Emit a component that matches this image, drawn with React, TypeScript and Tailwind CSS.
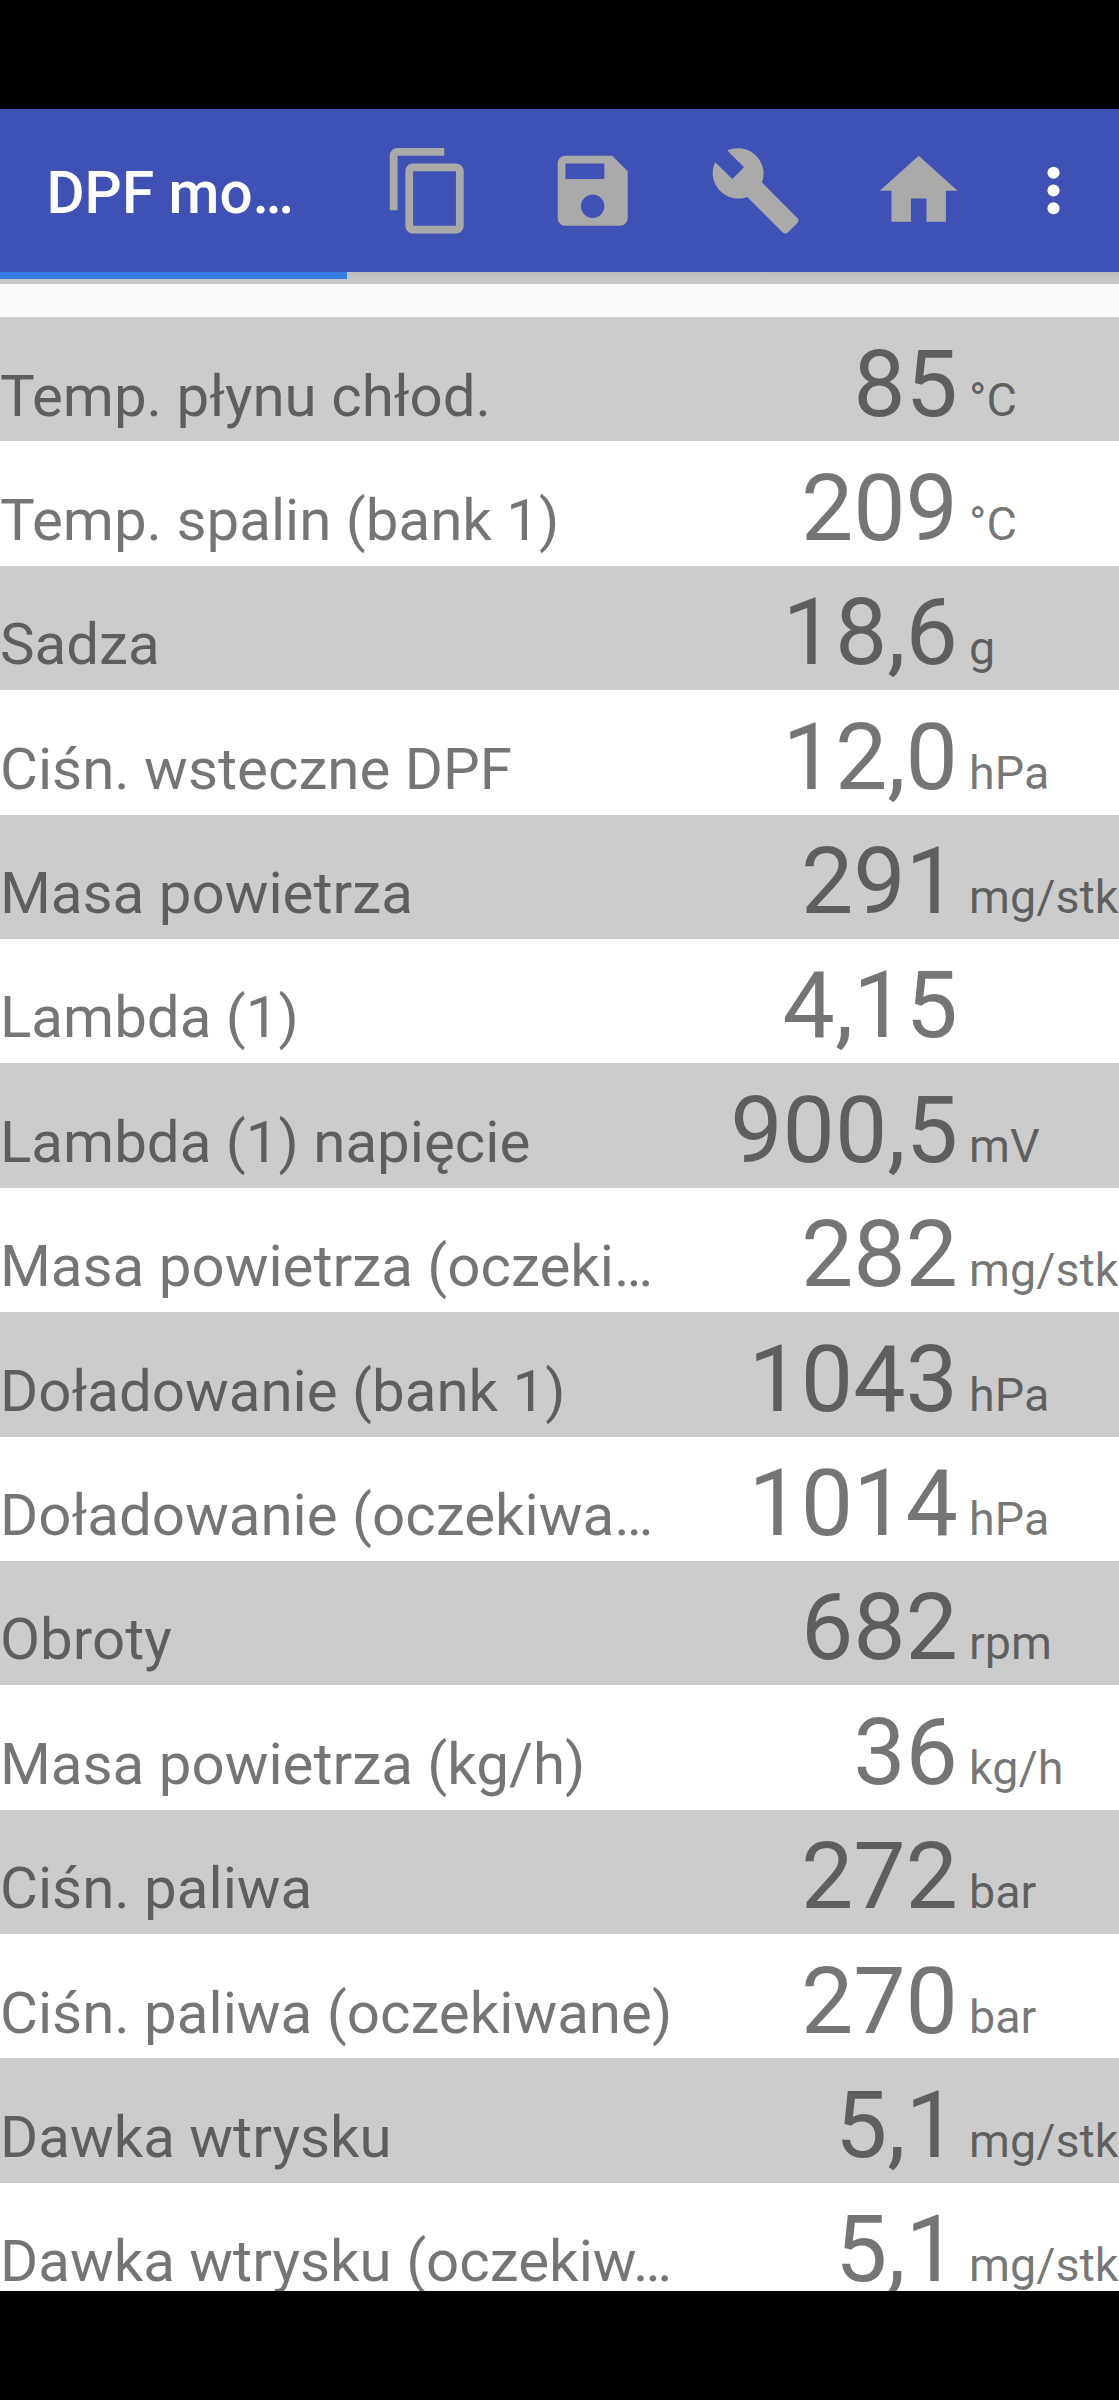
import { clsx } from 'clsx';

interface Reading {
  label: string;
  value: string;
  unit?: string;
}

const READINGS: Reading[] = [
  { label: 'Temp. płynu chłod.', value: '85', unit: '°C' },
  { label: 'Temp. spalin (bank 1)', value: '209', unit: '°C' },
  { label: 'Sadza', value: '18,6', unit: 'g' },
  { label: 'Ciśn. wsteczne DPF', value: '12,0', unit: 'hPa' },
  { label: 'Masa powietrza', value: '291', unit: 'mg/stk' },
  { label: 'Lambda (1)', value: '4,15' },
  { label: 'Lambda (1) napięcie', value: '900,5', unit: 'mV' },
  { label: 'Masa powietrza (oczeki…', value: '282', unit: 'mg/stk' },
  { label: 'Doładowanie (bank 1)', value: '1043', unit: 'hPa' },
  { label: 'Doładowanie (oczekiwa…', value: '1014', unit: 'hPa' },
  { label: 'Obroty', value: '682', unit: 'rpm' },
  { label: 'Masa powietrza (kg/h)', value: '36', unit: 'kg/h' },
  { label: 'Ciśn. paliwa', value: '272', unit: 'bar' },
  { label: 'Ciśn. paliwa (oczekiwane)', value: '270', unit: 'bar' },
  { label: 'Dawka wtrysku', value: '5,1', unit: 'mg/stk' },
  { label: 'Dawka wtrysku (oczekiw…', value: '5,1', unit: 'mg/stk' },
];

const ACTIONS = [
  {
    name: 'Kopiuj',
    path: 'M16 1H4c-1.1 0-2 .9-2 2v14h2V3h12V1zm3 4H8c-1.1 0-2 .9-2 2v14c0 1.1.9 2 2 2h11c1.1 0 2-.9 2-2V7c0-1.1-.9-2-2-2zm0 16H8V7h11v14z',
  },
  {
    name: 'Zapisz',
    path: 'M17 3H5c-1.11 0-2 .9-2 2v14c0 1.1.89 2 2 2h14c1.1 0 2-.9 2-2V7l-4-4zm-5 16c-1.66 0-3-1.34-3-3s1.34-3 3-3 3 1.34 3 3-1.34 3-3 3zm3-10H5V5h10v4z',
  },
  {
    name: 'Ustawienia',
    path: 'M22.7 19l-9.1-9.1c.9-2.3.4-5-1.5-6.9-2-2-5-2.4-7.4-1.3L9 6 6 9 1.6 4.7C.4 7.1.9 10.1 2.9 12.1c1.9 1.9 4.6 2.4 6.9 1.5l9.1 9.1c.4.4 1 .4 1.4 0l2.3-2.3c.5-.4.5-1.1.1-1.4z',
  },
  { name: 'Start', path: 'M10 20v-6h4v6h5v-8h3L12 3 2 12h3v8z' },
];

function Toolbar() {
  return (
    <header className="flex h-[163px] shrink-0 items-center bg-[#3f51b5]">
      <h1 className="w-[347.5px] pt-[5px] pl-[46.5px] text-[58.4px] leading-none font-medium whitespace-nowrap text-white">
        DPF mo…
      </h1>
      {ACTIONS.map((action) => (
        <button
          key={action.name}
          aria-label={action.name}
          className="flex w-[163.3px] justify-center text-[#aaaaaa]"
        >
          <svg viewBox="0 0 24 24" className="size-[93.4px]" fill="currentColor">
            <path d={action.path} />
          </svg>
        </button>
      ))}
      <button aria-label="Więcej" className="flex w-[105px] justify-center text-white">
        <svg viewBox="0 0 24 24" className="size-[71px]" fill="currentColor">
          <circle cx="12" cy="6" r="2.05" />
          <circle cx="12" cy="12" r="2.05" />
          <circle cx="12" cy="18" r="2.05" />
        </svg>
      </button>
    </header>
  );
}

function ReadingRow({ reading, shaded }: { reading: Reading; shaded: boolean }) {
  return (
    <li
      className={clsx(
        'flex h-[124.4px] shrink-0 items-baseline pt-[20.5px] leading-none whitespace-nowrap text-black/54',
        shaded ? 'bg-[#cccccc]' : 'bg-white'
      )}
    >
      <span className="w-[680px] text-[58.25px]">{reading.label}</span>
      <span className="flex w-[278px] justify-end text-[93.2px]">{reading.value}</span>
      <span className="pl-[11px] text-[46.7px]">{reading.unit}</span>
    </li>
  );
}

export default function App() {
  return (
    <div className="flex h-[2400px] w-[1119px] flex-col overflow-hidden bg-black py-[109px] font-['Roboto',sans-serif]">
      <Toolbar />
      <main className="flex min-h-0 flex-1 flex-col overflow-hidden bg-[#fafafa]">
        <div className="mb-[33px] h-3 shrink-0 bg-linear-to-b from-[#bcbcba] to-[#c9c9c8]">
          <div className="h-[7px] w-[347px] bg-[#367fe0]" />
        </div>
        <ul className="flex flex-col">
          {READINGS.map((reading, i) => (
            <ReadingRow key={reading.label} reading={reading} shaded={i % 2 === 0} />
          ))}
        </ul>
      </main>
    </div>
  );
}
